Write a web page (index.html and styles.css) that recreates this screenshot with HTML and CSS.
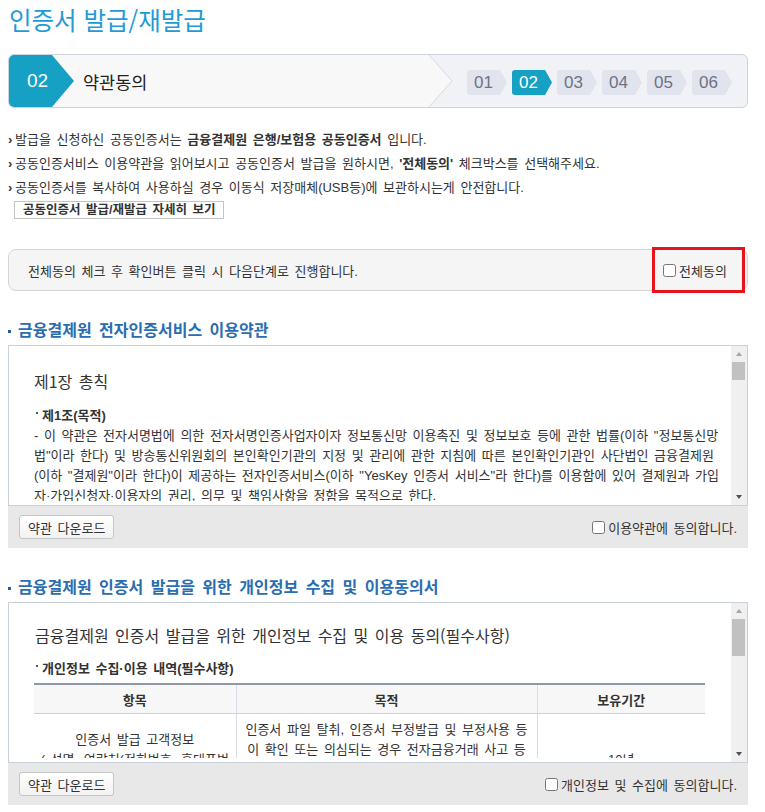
FILE: index.html
```html
<!DOCTYPE html>
<html lang="ko">
<head>
<meta charset="UTF-8">
<meta name="viewport" content="width=device-width, initial-scale=1.0">
<title>인증서 발급/재발급</title>
<link rel="stylesheet" href="styles.css">
</head>
<body>
<div class="page">
  <h1 class="page-title">인증서 발급/재발급</h1>

  <!-- step bar -->
  <div class="step-bar">
    <div class="step-now">
      <span class="step-badge">02</span>
      <span class="step-name">약관동의</span>
    </div>
    <svg class="step-cap" width="26" height="52" viewBox="0 0 26 52">
      <polygon points="0,0 1,0 24,26 1,52 0,52" fill="#f8f8f8"/>
      <polyline points="1,0 24,26 1,52" fill="none" stroke="#d6dae0"/>
    </svg>
    <ol class="step-list">
      <li>01</li>
      <li class="on">02</li>
      <li>03</li>
      <li>04</li>
      <li>05</li>
      <li>06</li>
    </ol>
  </div>

  <ul class="guide">
    <li>발급을 신청하신 공동인증서는 <b>금융결제원 은행/보험용 공동인증서</b> 입니다.</li>
    <li>공동인증서비스 이용약관을 읽어보시고 공동인증서 발급을 원하시면, <b>'전체동의'</b> 체크박스를 선택해주세요.</li>
    <li>공동인증서를 복사하여 사용하실 경우 이동식 저장매체(USB등)에 보관하시는게 안전합니다.</li>
  </ul>
  <button class="btn-detail" type="button">공동인증서 발급/재발급 자세히 보기</button>

  <div class="agree-all">
    <p>전체동의 체크 후 확인버튼 클릭 시 다음단계로 진행합니다.</p>
    <label class="agree-all-check"><input type="checkbox" id="agreeAll">전체동의</label>
  </div>

  <!-- terms 1 -->
  <h2 class="sec-title">금융결제원 전자인증서비스 이용약관</h2>
  <div class="terms">
    <div class="terms-body">
      <div class="terms-text">
        <h3 class="chapter">제1장 총칙</h3>
        <h4 class="article">제1조(목적)</h4>
        <p>- 이 약관은 전자서명법에 의한 전자서명인증사업자이자 정보통신망 이용촉진 및 정보보호 등에 관한 법률(이하 "정보통신망법"이라 한다) 및 방송통신위원회의 본인확인기관의 지정 및 관리에 관한 지침에 따른 본인확인기관인 사단법인 금융결제원(이하 "결제원"이라 한다)이 제공하는 전자인증서비스(이하 "YesKey 인증서 서비스"라 한다)를 이용함에 있어 결제원과 가입자·가입신청자·이용자의 권리, 의무 및 책임사항을 정함을 목적으로 한다.</p>
        <h4 class="article">제2조(용어의 정의)</h4>
        <p>- 이 약관에서 사용하는 용어의 정의는 다음과 같다. "인증서"란 전자서명생성정보가 가입자에게 유일하게 속한다는 사실 등을 확인하고 이를 증명하는 전자적 정보를 말한다.</p>
      </div>
      <div class="scrollbar" aria-hidden="true">
        <span class="sb-btn sb-up"></span>
        <span class="sb-track"><span class="sb-thumb" style="height: 18px"></span></span>
        <span class="sb-btn sb-down"></span>
      </div>
    </div>
    <div class="terms-foot">
      <button class="btn-down" type="button">약관 다운로드</button>
      <label class="agree-check"><input type="checkbox">이용약관에 동의합니다.</label>
    </div>
  </div>

  <!-- terms 2 -->
  <h2 class="sec-title">금융결제원 인증서 발급을 위한 개인정보 수집 및 이용동의서</h2>
  <div class="terms">
    <div class="terms-body">
      <div class="terms-text">
        <h3 class="doc-title">금융결제원 인증서 발급을 위한 개인정보 수집 및 이용 동의(필수사항)</h3>
        <h4 class="article">개인정보 수집·이용 내역(필수사항)</h4>
        <table class="info-table">
          <colgroup>
            <col class="c1">
            <col class="c2">
            <col class="c3">
          </colgroup>
          <thead>
            <tr><th>항목</th><th>목적</th><th>보유기간</th></tr>
          </thead>
          <tbody>
            <tr>
              <td>인증서 발급 고객정보<br>( 성명, 연락처(전화번호, 휴대폰번호), 이메일, 인증서 일련번호 )</td>
              <td>인증서 파일 탈취, 인증서 부정발급 및 부정사용 등이 확인 또는 의심되는 경우 전자금융거래 사고 등에 대한 고객 확인 및 안내, 인증서 발급·재발급·갱신 등 인증서 관리 업무 수행 및 이력 관리</td>
              <td>10년</td>
            </tr>
          </tbody>
        </table>
      </div>
      <div class="scrollbar" aria-hidden="true">
        <span class="sb-btn sb-up"></span>
        <span class="sb-track"><span class="sb-thumb" style="height: 37px"></span></span>
        <span class="sb-btn sb-down"></span>
      </div>
    </div>
    <div class="terms-foot">
      <button class="btn-down" type="button">약관 다운로드</button>
      <label class="agree-check"><input type="checkbox">개인정보 및 수집에 동의합니다.</label>
    </div>
  </div>
</div>
</body>
</html>
```

FILE: styles.css
```css
/* styles.css */
body {
  margin: 0;
  background: #fff;
  color: #333;
  font-family: "Liberation Sans", "Noto Sans CJK KR", sans-serif;
  font-size: 13px;
  word-spacing: 2px;
}

.page {
  width: 740px;
  margin-left: 8px;
  padding-top: 3px;
}

.page-title {
  margin: 0 0 17px;
  padding-left: 1px;
  color: #1f9bd6;
  font-family: "Noto Sans CJK KR", sans-serif;
  font-size: 24.5px;
  font-weight: normal;
  line-height: 34px;
  word-spacing: normal;
}

/* step bar */
.step-bar {
  display: flex;
  height: 52px;
  border: 1px solid #cdd3db;
  border-radius: 6px;
  background: #f1f2f5;
  overflow: hidden;
  word-spacing: normal;
}

.step-now {
  display: flex;
  align-items: center;
  width: 419px;
  background: #f8f8f8;
}

.step-badge {
  align-self: stretch;
  width: 65px;
  padding-left: 18px;
  box-sizing: border-box;
  background: #16a0c4;
  color: #fff;
  font-size: 19px;
  line-height: 52px;
  clip-path: polygon(0 0, 43px 0, 100% 50%, 43px 100%, 0 100%);
}

.step-name {
  margin-left: 9px;
  color: #222;
  font-family: "Noto Sans CJK KR", sans-serif;
  font-size: 17.5px;
}

.step-cap {
  flex: none;
}

.step-list {
  flex: 1;
  display: flex;
  justify-content: flex-end;
  align-items: center;
  gap: 5px;
  margin: 0;
  padding: 3px 15px 0 0;
  list-style: none;
}

.step-list li {
  width: 40px;
  height: 25px;
  padding-right: 7px;
  box-sizing: border-box;
  border-radius: 3px;
  background: #e1e4ec;
  color: #6d7287;
  font-size: 17px;
  line-height: 25px;
  text-align: center;
  clip-path: polygon(0 0, 33px 0, 100% 50%, 33px 100%, 0 100%);
}

.step-list li.on {
  background: #16a0c4;
  color: #fff;
}

/* guide text */
.guide {
  margin: 20px 0 0;
  padding: 0;
  list-style: none;
  line-height: 24px;
}

.guide li::before {
  content: "\203A";
  display: inline-block;
  width: 7px;
  font-weight: bold;
}

.guide b {
  color: #333;
}

.btn-detail {
  display: block;
  height: 18px;
  margin: 1px 0 0 6px;
  padding: 0 8px;
  border: 1px solid #c4c4c4;
  background: #fff;
  color: #333;
  font: bold 12.5px/16px "Liberation Sans", "Noto Sans CJK KR", sans-serif;
  word-spacing: 2px;
}

/* agree all */
.agree-all {
  display: flex;
  align-items: center;
  justify-content: space-between;
  height: 40px;
  margin-top: 30px;
  padding-left: 19px;
  border: 1px solid #d5d5d5;
  border-radius: 8px;
  background: #f5f5f5;
}

.agree-all p {
  margin: 0;
}

.agree-all-check {
  display: flex;
  align-items: center;
  width: 93px;
  height: 46px;
  margin: -3px 2px -3px 0;
  padding-left: 8px;
  box-sizing: border-box;
  border: 3px solid #e8141c;
}

input[type="checkbox"] {
  width: 13px;
  height: 13px;
  margin: 0 3px 0 0;
}

/* sections */
.sec-title {
  margin: 28px 0 6px;
  color: #2a6db0;
  font-family: "Noto Sans CJK KR", sans-serif;
  font-size: 16px;
  font-weight: bold;
  line-height: 20px;
  word-spacing: 3px;
}

.sec-title::before {
  content: "";
  display: inline-block;
  width: 3px;
  height: 3px;
  margin-right: 7px;
  background: #1f5f9f;
  vertical-align: middle;
}

.terms-body {
  display: flex;
  align-items: flex-start;
  height: 161px;
  box-sizing: border-box;
  border: 1px solid #c8d0da;
  background: #fff;
}

.terms-text {
  flex: 1;
  height: 155px;
  box-sizing: border-box;
  padding: 21px 10px 0 25px;
  overflow: hidden;
}

/* drawn scrollbar (the text box scrolls in the original page) */
.scrollbar {
  display: flex;
  flex-direction: column;
  flex: none;
  align-self: stretch;
  width: 16px;
  background: #f0f0f0;
}

.sb-btn {
  display: flex;
  align-items: center;
  justify-content: center;
  height: 16px;
}

.sb-btn::before {
  content: "";
  border-left: 3.5px solid transparent;
  border-right: 3.5px solid transparent;
}

.sb-up::before {
  border-bottom: 4px solid #a3a3a3;
}

.sb-down::before {
  border-top: 4px solid #505050;
}

.sb-track {
  flex: 1;
  padding: 0 2px 0 1px;
}

.sb-thumb {
  display: block;
  background: #c1c1c1;
}

.chapter,
.doc-title {
  margin: 0;
  font-family: "Noto Sans CJK KR", sans-serif;
  font-size: 16px;
  font-weight: normal;
  line-height: 22px;
}

.chapter {
  margin-top: 3px;
}

.doc-title {
  margin-left: 1px;
}

.article {
  margin: 14px 0 0 2px;
  font-size: 13px;
  line-height: 20px;
}

.doc-title + .article {
  margin-top: 13px;
}

.article::before {
  content: "";
  display: inline-block;
  width: 2px;
  height: 2px;
  margin-right: 4px;
  background: #555;
  vertical-align: 6px;
}

.terms-text p {
  margin: 0;
  line-height: 20px;
}

/* table */
.info-table {
  width: 671px;
  margin-top: 4px;
  border-collapse: collapse;
  border-top: 2px solid #8e98a6;
}

.info-table .c1 { width: 202px; }
.info-table .c2 { width: 301px; }
.info-table .c3 { width: 168px; }

.info-table th {
  height: 28px;
  padding: 0;
  border-bottom: 1px solid #ccd3dc;
  background: #f7f7f7;
  font-size: 13px;
}

.info-table td {
  padding: 6px 8px;
  border-bottom: 1px solid #ccd3dc;
  line-height: 20px;
  text-align: center;
}

.info-table td:first-child {
  padding: 6px 6px;
}

.info-table th + th,
.info-table td + td {
  border-left: 1px solid #d8dde3;
}

/* terms foot */
.terms-foot {
  display: flex;
  align-items: center;
  justify-content: space-between;
  height: 42px;
  padding: 0 11px;
  background: #e8e8e8;
}

.btn-down {
  height: 24px;
  padding: 0 8px;
  border: 1px solid #c5c5c5;
  border-radius: 3px;
  background: linear-gradient(#fff, #f2f2f2);
  color: #333;
  font: 13px "Liberation Sans", "Noto Sans CJK KR", sans-serif;
  word-spacing: 2px;
}

.agree-check {
  display: flex;
  align-items: center;
}
```
